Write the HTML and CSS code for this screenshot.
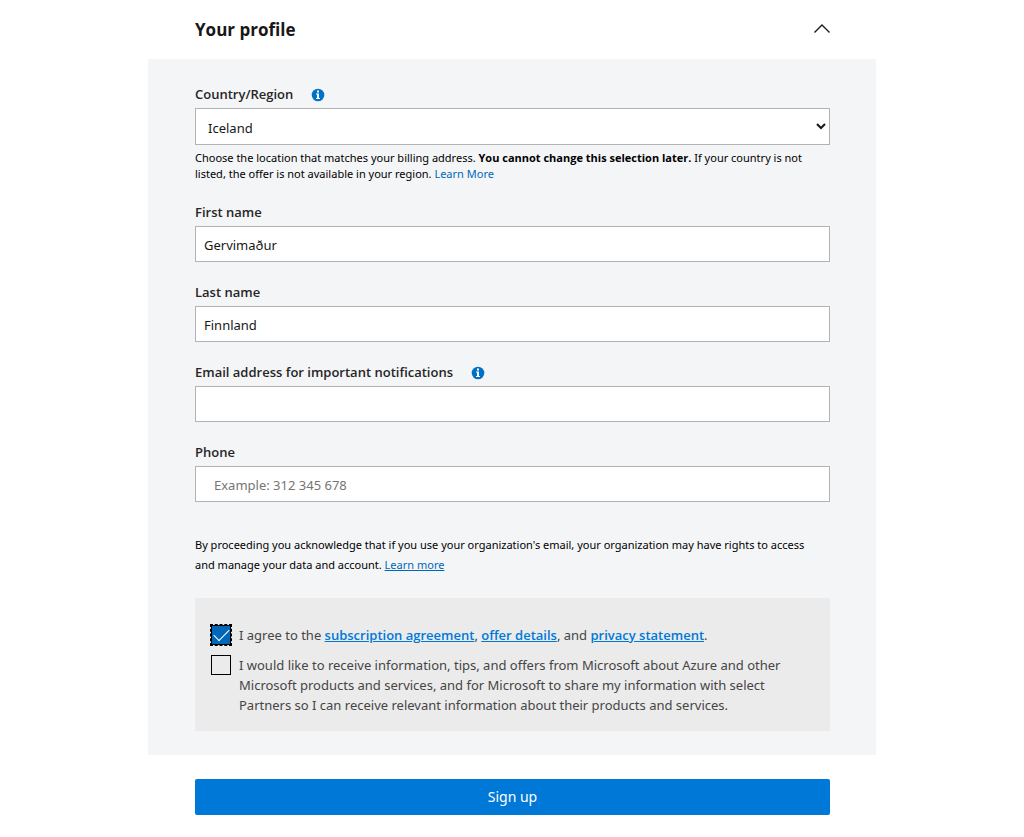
FILE: index.html
```html
<!DOCTYPE html>
<html lang="en">
<head>
    <meta charset="UTF-8">
    <meta name="viewport" content="width=device-width, initial-scale=1.0">
    <title>Your profile</title>
    <link rel="stylesheet" href="styles.css">
</head>
<body>
    <form class="container">
        <div class="header">
            <h1>Your profile</h1>
            <button type="button" class="collapse" aria-label="Collapse section" aria-expanded="true">
                <svg width="16" height="14" viewBox="0 0 16 14" fill="none" stroke="#201a24" stroke-width="1.4">
                    <path d="M0.5 9.5 L8 2 L15.5 9.5"/>
                </svg>
            </button>
        </div>

        <div class="panel">
            <div class="form-group">
                <div class="label-row">
                    <label for="country">Country/Region</label>
                    <svg class="info" viewBox="0 0 14 14">
                        <circle cx="7" cy="7" r="6.3" fill="#0072c6"/>
                        <path d="M6 2.5h2v2H6zM5 5.5h3v4.5h1v1H5v-1h1V6.5H5z" fill="#fff"/>
                    </svg>
                </div>
                <select id="country">
                    <option selected>Iceland</option>
                </select>
                <div class="help">Choose the location that matches your billing address. <strong>You cannot change this selection later.</strong> If your country is not listed, the offer is not available in your region. <a href="#">Learn More</a></div>
            </div>
            <div class="form-group">
                <label for="firstName">First name</label>
                <input type="text" id="firstName" value="Gervimaður">
            </div>
            <div class="form-group">
                <label for="lastName">Last name</label>
                <input type="text" id="lastName" value="Finnland">
            </div>
            <div class="form-group">
                <div class="label-row">
                    <label for="email">Email address for important notifications</label>
                    <svg class="info" viewBox="0 0 14 14">
                        <circle cx="7" cy="7" r="6.3" fill="#0072c6"/>
                        <path d="M6 2.5h2v2H6zM5 5.5h3v4.5h1v1H5v-1h1V6.5H5z" fill="#fff"/>
                    </svg>
                </div>
                <input type="email" id="email">
            </div>
            <div class="form-group">
                <label for="phone">Phone</label>
                <input type="tel" id="phone" class="phone" placeholder="Example: 312 345 678">
            </div>

            <p class="notice">By proceeding you acknowledge that if you use your organization's email, your organization may have rights to access and manage your data and account. <a href="#">Learn more</a></p>

            <div class="terms">
                <div class="check-row">
                    <input type="checkbox" id="agree" checked>
                    <label for="agree">I agree to the <a href="#">subscription agreement</a>, <a href="#">offer details</a>, and <a href="#">privacy statement</a>.</label>
                </div>
                <div class="check-row">
                    <input type="checkbox" id="offers">
                    <label for="offers">I would like to receive information, tips, and offers from Microsoft about Azure and other Microsoft products and services, and for Microsoft to share my information with select Partners so I can receive relevant information about their products and services.</label>
                </div>
            </div>
        </div>

        <div class="actions">
            <button type="submit" class="submit">Sign up</button>
        </div>
    </form>
</body>
</html>
```
FILE: styles.css
```css
* {
    box-sizing: border-box;
}

body {
    margin: 0;
    background-color: #fff;
    color: #000;
    font-family: "Segoe UI", "Noto Sans", sans-serif;
    font-size: 13px;
    line-height: 20px;
}

a {
    color: #0067b8;
}

.container {
    max-width: 728px;
    margin: 0 auto;
}

.header {
    display: flex;
    justify-content: space-between;
    align-items: center;
    height: 59px;
    padding: 0 46px 0 47px;
}

h1,
strong,
.form-group label,
.check-row a {
    font-family: "Segoe UI", "Open Sans", sans-serif;
}

h1 {
    margin: 0;
    color: #171717;
    font-size: 17px;
    font-weight: 700;
    line-height: 24px;
}

.collapse {
    display: flex;
    padding: 0;
    border: none;
    background: none;
    cursor: pointer;
}

.panel {
    padding: 25px 46px 24px 47px;
    background-color: #f4f5f7;
}

.form-group {
    margin-bottom: 20px;
}

.form-group label {
    display: block;
    margin-bottom: 4px;
    color: #262626;
    font-weight: 600;
}

.label-row {
    display: flex;
    gap: 18px;
}

.info {
    width: 14px;
    height: 14px;
    margin-top: 4px;
}

.form-group input,
.form-group select {
    display: block;
    width: 100%;
    height: 36px;
    padding: 2px 8px 0;
    border: 1px solid #b3b3b3;
    border-radius: 0;
    background-color: #fff;
    color: #171717;
    font-family: inherit;
    font-size: 13px;
}

.form-group select {
    height: 37px;
    padding: 2px 0 0 8px;
}

.form-group input.phone {
    padding-left: 18px;
}

.phone::placeholder {
    color: #757575;
}

.help {
    margin-top: 5px;
    font-size: 11px;
    line-height: 16px;
}

.help a {
    text-decoration: none;
}

.notice {
    margin: 33px 0 23px;
    padding-right: 8px;
    font-size: 11px;
}

.terms {
    display: grid;
    gap: 10px;
    padding: 27px 16px 16px;
    background-color: #ebebeb;
    color: #454545;
}

.check-row {
    display: flex;
    gap: 8px;
}

.check-row a {
    color: #0078d7;
    font-weight: 600;
}

.check-row input {
    display: flex;
    justify-content: center;
    align-items: center;
    flex: none;
    width: 20px;
    height: 20px;
    margin: 0;
    border: 1px solid #000;
    background-color: transparent;
    appearance: none;
}

.check-row input:checked {
    background-color: #0067b8;
    outline: 1px dashed #000;
}

/* tick mark */
.check-row input:checked::after {
    content: "";
    width: 14px;
    height: 7px;
    margin-bottom: 5px;
    border-left: 1px solid #fff;
    border-bottom: 1px solid #fff;
    transform: rotate(-45deg);
}

.actions {
    padding: 24px 46px 22px 47px;
}

.submit {
    display: block;
    width: 100%;
    height: 36px;
    padding: 0 0 2px;
    border: none;
    border-radius: 2px;
    background-color: #0078d7;
    color: #fff;
    font-family: inherit;
    font-size: 14px;
    cursor: pointer;
}
```
